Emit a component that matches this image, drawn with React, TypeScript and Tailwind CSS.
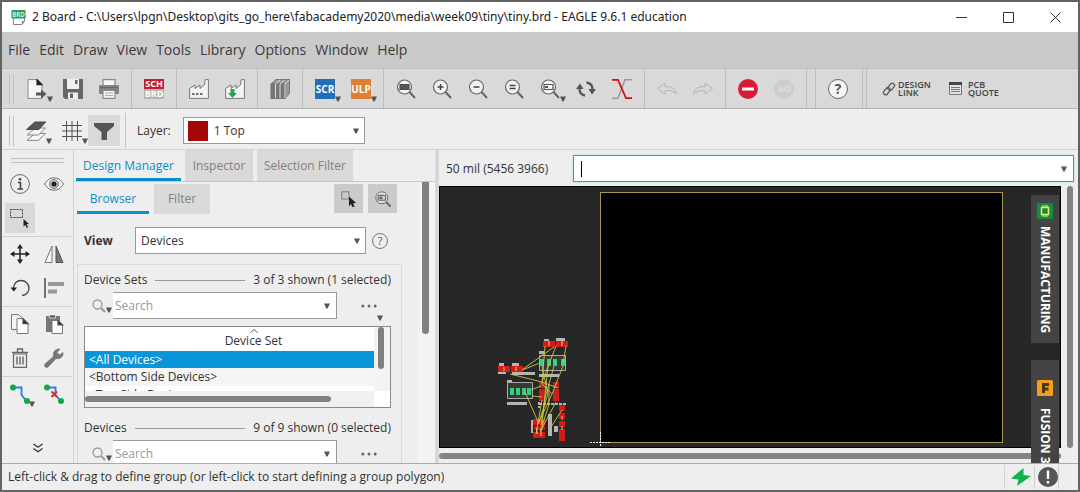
import type { ReactNode } from 'react';

interface ToolButtonProps {
  label: string;
  menu?: boolean;
  disabled?: boolean;
  children: ReactNode;
}

const Arrow = ({ className = '' }: { className?: string }) => (
  <svg viewBox="0 0 6 6" className={`pointer-events-none h-1.5 w-1.5 shrink-0 ${className}`} aria-hidden="true">
    <path d="M0 0.5h6L3.6 5.5H2.4z" fill="#555" />
  </svg>
);

const Icon = ({ size = 'md', children }: { size?: 'sm' | 'md'; children: ReactNode }) => (
  <svg
    viewBox="0 0 20 20"
    className={size === 'sm' ? 'h-4 w-4 shrink-0' : 'h-5 w-5 shrink-0'}
    fill="none"
    stroke="#4d4d4d"
    strokeWidth="1.2"
    aria-hidden="true"
  >
    {children}
  </svg>
);

const ToolButton = ({ label, menu = false, disabled = false, children }: ToolButtonProps) => (
  <button
    type="button"
    aria-label={label}
    disabled={disabled}
    className="relative flex h-[34px] w-9 shrink-0 items-center justify-center"
  >
    {children}
    {menu && <Arrow className="absolute right-0.5 bottom-1" />}
  </button>
);

const PaletteButton = ({ label, active = false, menu = false, children }: ToolButtonProps & { active?: boolean }) => (
  <button type="button" aria-label={label} className="relative flex h-[34px] w-[34px] items-center justify-center">
    <span className={`flex h-[30px] w-[30px] items-center justify-center ${active ? 'bg-[#d9d9d9]' : ''}`}>
      {children}
    </span>
    {menu && <Arrow className="absolute right-0.5 bottom-1" />}
  </button>
);

const Separator = () => <span className="mx-1 w-px shrink-0 self-stretch bg-[#bcbcbc]" />;

const Grip = () => <span className="h-[30px] w-[5px] shrink-0 border-x border-[#c0c0c0]" />;

const Lens = ({ children }: { children?: ReactNode }) => (
  <Icon>
    <circle cx="8.5" cy="8" r="7" fill="#f2f2f2" stroke="#666" />
    <path d="M13.5 13l5.5 6" stroke="#666" strokeWidth="2" />
    {children}
  </Icon>
);

const Factory = ({ children }: { children?: ReactNode }) => (
  <Icon>
    <path d="M.6 19.4V9.5L6 6v3.5L11 6v3.5L15.500 6l.7-5.400h3.200v18.800z" fill="#f3f3f3" stroke="#777" strokeWidth="1" />
    {children}
  </Icon>
);

const menus = ['File', 'Edit', 'Draw', 'View', 'Tools', 'Library', 'Options', 'Window', 'Help'];

const TitleBar = () => (
  <header className="flex h-[30px] items-center bg-white pr-[17px] pl-[9px]">
    <svg viewBox="0 0 16 17" className="h-4 w-4 shrink-0" aria-hidden="true">
      <path d="M2 6h12v7l-3 3.500H2z" fill="#fff" stroke="#777" />
      <path d="M14 13h-3v3.500z" fill="#777" />
      <rect x="0" y="1" width="15" height="9" rx="1" fill="#299b5b" />
      <text x="7.500" y="8" textAnchor="middle" fontSize="6.500" fontWeight="700" fill="#c9efd7">BRD</text>
    </svg>
    <h1 className="ml-[5px] truncate font-['Noto_Sans',sans-serif] text-xs text-[#222]">
      2 Board - C:\Users\lpgn\Desktop\gits_go_here\fabacademy2020\media\week09\tiny\tiny.brd - EAGLE 9.6.1 education
    </h1>
    <div className="ml-auto flex shrink-0 gap-9">
      <button type="button" aria-label="Minimize">
        <svg viewBox="0 0 11 11" className="h-[11px] w-[11px]"><path d="M0 5.500h11" stroke="#333" /></svg>
      </button>
      <button type="button" aria-label="Maximize">
        <svg viewBox="0 0 11 11" className="h-[11px] w-[11px]"><path d="M.5.5h10v10H.5z" fill="none" stroke="#333" /></svg>
      </button>
      <button type="button" aria-label="Close">
        <svg viewBox="0 0 11 11" className="h-[11px] w-[11px]"><path d="M.5.5l10 10M10.500.5l-10 10" stroke="#333" /></svg>
      </button>
    </div>
  </header>
);

const MenuBar = () => (
  <nav className="flex h-9 items-center gap-[9px] bg-[#cacaca] px-1.5 text-sm text-[#3a3a3a]">
    {menus.map((item) => (
      <button key={item} type="button">{item}</button>
    ))}
  </nav>
);

const MainToolbar = () => (
  <div className="flex h-[41px] items-center border-y border-t-[#bdbdbd] border-b-[#b5b5b5] bg-[#d9d9d9] pl-[7px]">
    <Grip />
    <span className="w-[5px] shrink-0" />
    <ToolButton label="Open" menu>
      <Icon>
        <path d="M1 .6h9.500l4.500 5v13.800H1z" fill="#f7f7f7" stroke="#888" strokeWidth="1" />
        <path d="M10 .6v5h5z" fill="#222" stroke="#222" />
        <path d="M9 13.500h5V10.500l5.500 4.500-5.500 4.500v-3H9z" fill="#555" stroke="none" />
      </Icon>
    </ToolButton>
    <ToolButton label="Save">
      <Icon>
        <path d="M0 0h20v20H2l-2-2z" fill="#666" stroke="none" />
        <path d="M4 0h12v10H4zM5 13.500h10V20H5z" fill="#f0f0f0" stroke="none" />
        <path d="M12 1h2.500v4H12zM7 14.500h3V19H7z" fill="#666" stroke="none" />
      </Icon>
    </ToolButton>
    <ToolButton label="Print">
      <Icon>
        <path d="M4 6V.6h12V6" fill="#f7f7f7" stroke="#888" />
        <rect x="0" y="6" width="20" height="9" rx="1" fill="#858585" stroke="none" />
        <path d="M1 8.500h18" stroke="#666" />
        <path d="M4 11.500h12v7.900H4z" fill="#f7f7f7" stroke="#888" />
        <path d="M6 14h8M6 16.500h8" stroke="#aaa" />
      </Icon>
    </ToolButton>
    <Separator />
    <ToolButton label="Switch to schematic">
      <span className="h-5 w-5 text-center text-[9px] leading-[10px] font-bold text-white">
        <span className="block bg-[#c4202c]">SCH</span>
        <span className="block bg-[#b5b5b5]">BRD</span>
      </span>
    </ToolButton>
    <Separator />
    <ToolButton label="CAM processor">
      <Factory><path d="M3 15h2.500M7 15h2.500M11 15h2.500" stroke="#444" strokeWidth="1.500" /></Factory>
    </ToolButton>
    <ToolButton label="Export manufacturing data">
      <Factory>
        <path d="M5.500 10h4v4H12l-4.500 5L3 14h2.500z" fill="#1fac46" stroke="none" />
      </Factory>
    </ToolButton>
    <Separator />
    <ToolButton label="Library manager">
      <Icon>
        <path d="M1 5L6 .5h13.500L15 5zM15 5l4.500-4.500v14L15 19.500z" fill="#999" stroke="#777" strokeWidth="1" />
        <path d="M1 5h14v14.500H1z" fill="#777" stroke="#777" />
        <path d="M5.500 19V5l4.500-4M10 19V5l4.500-4M15 19V5l4-4" stroke="#ddd" strokeWidth="1" />
      </Icon>
    </ToolButton>
    <Separator />
    <ToolButton label="Run script" menu>
      <span className="h-5 w-5 bg-[#226eba] text-center text-[10px] leading-5 font-bold text-white">SCR</span>
    </ToolButton>
    <ToolButton label="Run ULP" menu>
      <span className="h-5 w-5 bg-[#df7f37] text-center text-[10px] leading-5 font-bold text-white">ULP</span>
    </ToolButton>
    <Separator />
    <ToolButton label="Zoom to fit"><Lens><path d="M4 5.500h9v5H4z" fill="#555" /></Lens></ToolButton>
    <ToolButton label="Zoom in"><Lens><path d="M5.500 8h6M8.500 5v6" stroke="#444" strokeWidth="1.500" /></Lens></ToolButton>
    <ToolButton label="Zoom out"><Lens><path d="M5.500 8h6" stroke="#444" strokeWidth="1.500" /></Lens></ToolButton>
    <ToolButton label="Redraw"><Lens><path d="M5.500 6.500h6M5.500 9.500h6" stroke="#444" strokeWidth="1.300" /></Lens></ToolButton>
    <ToolButton label="Zoom select" menu>
      <Lens><path d="M4 5.500h9v5H4z" stroke="#555" /><path d="M5 7h3v2H5z" fill="#555" stroke="none" /></Lens>
    </ToolButton>
    <ToolButton label="Refresh">
      <Icon>
        <path d="M3.500 9.500c0 4 2.500 6.500 5.500 7M16.500 10.500c0-4-2.500-6.500-6-7" stroke="#555" strokeWidth="2.300" />
        <path d="M0 10l4-5.500L7.500 10zM12.500 10h7.500l-4 5.500z" fill="#555" stroke="none" />
      </Icon>
    </ToolButton>
    <ToolButton label="Ratsnest">
      <Icon>
        <path d="M0 19.200h6L13 .8h7" stroke="#999" strokeWidth="1.500" />
        <path d="M0 .8h6l8 18.400h6" stroke="#d80d0d" strokeWidth="1.700" />
      </Icon>
    </ToolButton>
    <Separator />
    <ToolButton label="Undo" disabled>
      <Icon><path d="M.5 9.500L8 4v3.500c6 0 11 1.500 11.500 7.500C17 12 13 11.500 8 11.500V15z" stroke="#b3b3b3" strokeWidth="1" /></Icon>
    </ToolButton>
    <ToolButton label="Redo" disabled>
      <Icon><path d="M19.500 9.500L12 4v3.500C6 7.500 1 9 .5 15 3 12 7 11.500 12 11.500V15z" stroke="#b3b3b3" strokeWidth="1" /></Icon>
    </ToolButton>
    <Separator />
    <ToolButton label="Stop">
      <Icon>
        <circle cx="10" cy="10" r="10" fill="#da1b36" stroke="none" />
        <path d="M4 10h12" stroke="#fff" strokeWidth="3" />
      </Icon>
    </ToolButton>
    <ToolButton label="Go" disabled>
      <span className="h-5 w-5 rounded-full bg-[#cdcdcd] text-center text-[9px] leading-5 font-bold text-[#dedede]">GO</span>
    </ToolButton>
    <Separator />
    <Separator />
    <ToolButton label="Help">
      <span className="h-5 w-5 rounded-full border border-[#666] bg-[#f5f5f5] text-center text-sm leading-[18px] font-bold text-[#555]">?</span>
    </ToolButton>
    <span className="mr-[15px] ml-1.5 w-[5px] shrink-0 self-stretch border-x border-[#bcbcbc]" />
    <button type="button" className="flex items-center gap-0.5 text-left text-[9px] leading-[8px] font-semibold text-[#444]">
      <svg viewBox="0 0 14 14" className="h-3.5 w-3.5" fill="none" stroke="#555" strokeWidth="1.200" aria-hidden="true">
        <rect x="-4" y="-2.200" width="8" height="4.400" rx="2.200" transform="translate(4.800 9.200) rotate(-50)" />
        <rect x="-4" y="-2.200" width="8" height="4.400" rx="2.200" transform="translate(9.200 4.800) rotate(-50)" />
      </svg>
      <span>DESIGN<br />LINK</span>
    </button>
    <button type="button" className="ml-[18px] flex items-center gap-1.5 text-left text-[9px] leading-[8px] font-semibold text-[#444]">
      <svg viewBox="0 0 13 13" className="h-[13px] w-[13px]" stroke="#777" aria-hidden="true">
        <path d="M.5.5h12v12H.5z" fill="#e4e4e4" />
        <path d="M0 1.500h13" stroke="#444" strokeWidth="3" />
        <path d="M2 5.500h9M2 7.500h9M2 9.500h9" />
      </svg>
      <span>PCB<br />QUOTE</span>
    </button>
  </div>
);

const LayerBar = () => (
  <div className="flex h-[41px] items-center border-b border-[#d2d2d2] pt-[3px] pl-[7px]">
    <Grip />
    <span className="w-1 shrink-0" />
    <ToolButton label="Layer settings" menu>
      <Icon>
        <path d="M1 19.400l8-7h10.500l-7 7z" fill="#f4f4f4" stroke="#888" strokeWidth="1" />
        <path d="M1 14l8-7h10.500l-7 7z" fill="#f4f4f4" stroke="#888" strokeWidth="1" />
        <path d="M1 8.500L9 1h10.500l-7 7.500z" fill="#555" />
      </Icon>
    </ToolButton>
    <ToolButton label="Grid" menu>
      <Icon><path d="M4.500 0v20M10 0v20M15.500 0v20M0 4.500h20M0 10h20M0 15.500h20" stroke="#555" strokeWidth="1" /></Icon>
    </ToolButton>
    <button type="button" aria-label="Selection filter" className="-ml-0.5 flex h-[31px] w-8 shrink-0 items-center justify-center bg-[#d9d9d9]">
      <Icon><path d="M0 2h20v3l-7 6v8H7.500v-8L0 5z" fill="#555" stroke="none" /></Icon>
    </button>
    <span className="mx-[5px] h-[35px] w-px shrink-0 bg-[#c4c4c4]" />
    <label htmlFor="layer" className="mr-3 ml-1.5 text-xs">Layer:</label>
    <div className="flex h-[27px] w-[182px] items-center border border-[#999] bg-white pr-[5px] pl-1">
      <span className="h-5 w-5 bg-[#a50707]" />
      <select id="layer" className="h-full flex-1 appearance-none pl-1.5 text-xs outline-none">
        <option>1 Top</option>
      </select>
      <Arrow />
    </div>
  </div>
);

const Palette = () => (
  <aside className="flex w-[72px] shrink-0 flex-col border-r border-[#d2d2d2]">
    <span className="mx-[9px] mt-2 mb-1 h-[5px] shrink-0 border-y border-[#c0c0c0]" />
    <div className="flex w-[70px] flex-wrap border-b border-[#d2d2d2] pb-px pl-px">
      <PaletteButton label="Info">
        <Icon>
          <circle cx="10" cy="10" r="9.400" stroke="#666" strokeWidth="1" />
          <path d="M8 8.500h2.500V15M7.500 15h5.500" stroke="#444" strokeWidth="1.600" />
          <circle cx="10" cy="5.300" r="1.300" fill="#444" stroke="none" />
        </Icon>
      </PaletteButton>
      <PaletteButton label="Show">
        <Icon>
          <path d="M.6 10C3 6 6 3.800 10 3.800S17 6 19.400 10C17 14 14 16.200 10 16.200S3 14 .6 10z" fill="#f5f5f5" stroke="#666" strokeWidth="1" />
          <circle cx="10" cy="10" r="4.500" fill="#ccc" stroke="#777" strokeWidth="1" />
          <circle cx="10" cy="10" r="2.600" fill="#222" stroke="none" />
        </Icon>
      </PaletteButton>
      <PaletteButton label="Group" active>
        <Icon>
          <path d="M.5 1.500h12v8H.5z" stroke="#444" strokeWidth="1" strokeDasharray="2 1" />
          <path d="M13.500 11l5.500 5-2.400.3 1.400 3-1.300.6-1.400-3-1.800 1.700z" fill="#222" stroke="none" />
        </Icon>
      </PaletteButton>
    </div>
    <div className="flex w-[70px] flex-wrap border-b border-[#d2d2d2] pb-px pl-px">
      <PaletteButton label="Move">
        <Icon>
          <path d="M10 2v16M2 10h16" stroke="#222" strokeWidth="1.500" />
          <path d="M10 0l3 4.500H7zM10 20l3-4.500H7zM0 10l4.500-3v6zM20 10l-4.500-3v6z" fill="#222" stroke="none" />
        </Icon>
      </PaletteButton>
      <PaletteButton label="Mirror">
        <Icon>
          <path d="M8 2v16.500H1z" fill="#f7f7f7" stroke="#777" strokeWidth="1" />
          <path d="M12 2v16.500h7z" fill="#777" stroke="#555" strokeWidth="1" />
        </Icon>
      </PaletteButton>
      <PaletteButton label="Rotate">
        <Icon>
          <path d="M3.500 11C3.500 5 7 2.500 11 2.500c4.500 0 8 3.500 8 7.500s-3 7.500-7 7.500" stroke="#444" strokeWidth="1.300" />
          <path d="M.5 9.500h6.500L3.800 13.500z" fill="#222" stroke="none" />
        </Icon>
      </PaletteButton>
      <PaletteButton label="Align">
        <Icon>
          <path d="M1 0v20" stroke="#222" />
          <path d="M4 6h16M4 13.500h9" stroke="#999" strokeWidth="4" />
        </Icon>
      </PaletteButton>
    </div>
    <div className="flex w-[70px] flex-wrap border-b border-[#d2d2d2] pb-px pl-px">
      <PaletteButton label="Copy">
        <Icon>
          <path d="M1.500.6h7l4 4v11h-11z" fill="#f7f7f7" stroke="#777" strokeWidth="1" />
          <path d="M7 4.600h6l5 5v9.900H7z" fill="#fff" stroke="#777" strokeWidth="1" />
          <path d="M13 4.600v5h5z" fill="#333" />
        </Icon>
      </PaletteButton>
      <PaletteButton label="Paste">
        <Icon>
          <path d="M2 2h14v16H2z" fill="#777" stroke="none" />
          <path d="M5.500 1h6v3h-6z" fill="#555" stroke="#eee" strokeWidth=".8" />
          <path d="M8 6.500h6l4.500 4.500v8.500H8z" fill="#fff" stroke="#777" strokeWidth="1" />
          <path d="M14 6.500V11h4.500z" fill="#333" />
        </Icon>
      </PaletteButton>
      <PaletteButton label="Delete">
        <Icon>
          <path d="M3.500 6h13v13.400h-13z" fill="#eee" stroke="#666" />
          <path d="M2 4.500h16M7.500 4V1h5v3M7 8.500v8M10 8.500v8M13 8.500v8" stroke="#666" strokeWidth="1.400" />
        </Icon>
      </PaletteButton>
      <PaletteButton label="Properties">
        <Icon>
          <path d="M1 16l8.500-7.500C8.500 4 11.500.5 16 1l-3 3.500 2.500 2.500L19 4.500c.5 4-2.500 7-7 6L4 19c-2 1.500-4.500-1-3-3z" fill="#777" stroke="#666" strokeWidth=".6" />
        </Icon>
      </PaletteButton>
    </div>
    <div className="flex w-[70px] flex-wrap pl-px">
      <PaletteButton label="Route" menu>
        <Icon>
          <path d="M3 3.500h8.500V11l5 6" stroke="#1b86d8" strokeWidth="1.800" />
          <circle cx="3" cy="3.500" r="3" fill="#13a547" stroke="none" />
          <circle cx="17" cy="17" r="3" fill="#13a547" stroke="none" />
        </Icon>
      </PaletteButton>
      <PaletteButton label="Ripup">
        <Icon>
          <path d="M3 3.500h8.500V11l5 6" stroke="#1b86d8" strokeWidth="1.800" />
          <circle cx="3" cy="3.500" r="3" fill="#13a547" stroke="none" />
          <circle cx="17" cy="17" r="3" fill="#13a547" stroke="none" />
          <path d="M7.500 7.500l5.500 5.500M13 7.500L7.500 13" stroke="#e3252c" strokeWidth="2" />
        </Icon>
      </PaletteButton>
    </div>
    <button type="button" aria-label="More tools" className="mt-auto mb-2.5 self-center">
      <svg viewBox="0 0 10 10" className="h-2.5 w-2.5" fill="none" stroke="#333" strokeWidth="1.300">
        <path d="M.5 1L5 4.300 9.500 1M.5 5.500L5 8.800l4.500-3.300" />
      </svg>
    </button>
  </aside>
);

interface SetHeadingProps {
  title: string;
  summary: string;
}

const SetHeading = ({ title, summary }: SetHeadingProps) => (
  <div className="flex h-6 items-center gap-2 pr-2.5">
    <h2>{title}</h2>
    <span className="h-px flex-1 bg-[#999]" />
    <span>{summary}</span>
  </div>
);

const SearchRow = ({ id }: { id: string }) => (
  <div className="flex h-[27px] items-center pr-[18px] pl-2">
    <label htmlFor={id} aria-label="Search" className="flex w-[21px] shrink-0 items-end">
      <svg viewBox="0 0 14 14" className="h-3.5 w-3.5" fill="none" stroke="#999" strokeWidth="1.300">
        <circle cx="5.500" cy="5.500" r="4.500" />
        <path d="M9 9l4 4" strokeWidth="2" />
      </svg>
      <Arrow />
    </label>
    <div className="flex h-full min-w-0 flex-1 items-center border border-l-0 border-[#999] bg-white pr-1.5">
      <input id={id} placeholder="Search" className="min-w-0 flex-1 px-0.5 outline-none placeholder:text-[#999]" />
      <Arrow />
    </div>
    <button type="button" aria-label="More options" className="relative ml-6 flex h-[27px] w-[22px] items-center">
      <svg viewBox="0 0 16 4" className="h-1 w-4" fill="#666">
        <circle cx="1.800" cy="2" r="1.500" />
        <circle cx="8" cy="2" r="1.500" />
        <circle cx="14.200" cy="2" r="1.500" />
      </svg>
      <Arrow className="absolute right-0 -bottom-0.5" />
    </button>
  </div>
);

const DeviceSetTable = () => (
  <div className="mr-2.5 border border-[#888] bg-white">
    <div className="flex h-16">
      <div className="min-w-0 flex-1 overflow-hidden">
        <table className="w-full border-collapse">
          <thead>
            <tr>
              <th scope="col" className="h-6 p-0 pl-12 font-normal">
                <span className="flex flex-col items-center">
                  <svg viewBox="0 0 8 4" className="h-1 w-2" fill="none" stroke="#555"><path d="M.5 3.500L4 .5l3.500 3" /></svg>
                  <span className="leading-4">Device Set</span>
                </span>
              </th>
            </tr>
          </thead>
          <tbody>
            <tr className="bg-[#0895d9] text-white"><td className="h-[17px] p-0 pl-1 leading-[17px]">&lt;All Devices&gt;</td></tr>
            <tr className="bg-[#f5f5f5]"><td className="h-[18px] p-0 pl-1 leading-[18px]">&lt;Bottom Side Devices&gt;</td></tr>
            <tr><td className="p-0 pl-1 leading-[18px]">&lt;Top Side Devices&gt;</td></tr>
          </tbody>
        </table>
      </div>
      <div className="w-4 shrink-0 bg-[#f3f3f3] pl-1">
        <span className="block h-[42px] w-1.5 rounded-full bg-[#808080]" />
      </div>
    </div>
    <div className="mr-4 flex h-4 items-center bg-[#f0f0f0]">
      <span className="h-1.5 w-[246px] rounded-full bg-[#808080]" />
    </div>
  </div>
);

const DesignManager = () => (
  <section className="flex w-[361px] shrink-0 flex-col text-xs">
    <div role="tablist" className="flex h-8 shrink-0 gap-1 border-b border-[#c8c8c8] pl-0.5">
      <button role="tab" aria-selected="true" className="w-[105px] border-b-[3px] border-[#0a8fc9] pt-[3px] text-[#0a8fc9]">Design Manager</button>
      <button role="tab" aria-selected="false" className="w-[68px] bg-[#d9d9d9] text-[#808080]">Inspector</button>
      <button role="tab" aria-selected="false" className="w-24 bg-[#d9d9d9] text-[#808080]">Selection Filter</button>
    </div>
    <div className="flex min-h-0 flex-1">
      <div className="min-w-0 flex-1 px-[3px]">
        <div className="mt-0.5 flex h-[30px] gap-[5px] pr-[18px]">
          <button role="tab" aria-selected="true" className="w-[72px] border-b-[3px] border-[#0a8fc9] pt-0.5 text-[#0a8fc9]">Browser</button>
          <button role="tab" aria-selected="false" className="w-14 bg-[#d9d9d9] text-[#808080]">Filter</button>
          <button type="button" aria-label="Pick object" className="ml-auto flex h-[29px] w-[29px] items-center justify-center bg-[#cbcbcb]">
            <Icon size="sm">
              <path d="M1 1h9v9H1z" stroke="#777" />
              <path d="M10 7l9 8-4 .4 2 4-2.500 1-2-4-2.500 2.600z" fill="#222" stroke="none" />
            </Icon>
          </button>
          <button type="button" aria-label="Zoom to object" className="flex h-[29px] w-[29px] items-center justify-center bg-[#cbcbcb]">
            <Icon size="sm">
              <circle cx="8.500" cy="8.500" r="7.500" fill="#ddd" stroke="#666" />
              <path d="M14 14l5.500 5.500" stroke="#666" strokeWidth="2.500" />
              <path d="M4 5.500h9v6H4zM6 7.500h3v2H6z" stroke="#555" />
            </Icon>
          </button>
        </div>
        <div className="mt-[13px] flex items-center pl-[7px]">
          <label htmlFor="view" className="w-[51px] font-bold">View</label>
          <div className="flex h-[27px] w-[231px] items-center border border-[#999] bg-white pr-[5px]">
            <select id="view" className="h-full flex-1 appearance-none pl-[5px] outline-none">
              <option>Devices</option>
            </select>
            <Arrow />
          </div>
          <button type="button" aria-label="View help" className="ml-1.5 h-4 w-4 rounded-full border border-[#777] text-[11px] leading-[14px] text-[#555]">?</button>
        </div>
        <div className="mt-2.5 mr-[13px] border border-b-0 border-[#dadada] pt-[3px] pl-1.5">
          <SetHeading title="Device Sets" summary="3 of 3 shown (1 selected)" />
          <SearchRow id="search-sets" />
          <div className="h-[7px]" />
          <DeviceSetTable />
          <div className="h-2" />
          <SetHeading title="Devices" summary="9 of 9 shown (0 selected)" />
          <SearchRow id="search-devices" />
        </div>
      </div>
      <div className="w-[17px] shrink-0 bg-[#f3f3f3] pl-1">
        <span className="block h-[152px] w-[7px] rounded-b bg-[#808080]" />
      </div>
    </div>
  </section>
);

const greenPads = [[46, 25], [53, 25], [59, 25], [67, 25], [16, 54], [22, 54], [28, 54], [33, 54]];

const redPads = [
  [49, 7], [55, 7], [62, 7], [68, 7],
  [4, 32], [10, 32], [17, 32], [23, 32],
  [45, 48], [45, 55], [45, 61], [59, 48], [59, 55], [59, 61],
  [39, 85], [45, 85], [39, 98], [45, 98],
  [65, 71], [65, 79], [65, 87], [65, 95], [65, 101]
];

const BoardDrawing = () => (
  <svg viewBox="0 0 120 113" className="absolute bottom-0 left-[54px] h-[113px] w-[120px]" aria-label="Unplaced components">
    <path
      d="M50 5h5v2h-5zM62 4h9v3h-9zM5 29h5v3H5zM18 29h7v3h-7zM4 37h8v3H4zM18 38h23v3H18zM13 46h5v2h-5zM13 68h20v3H13zM45 17h5v3h-5zM45 40h20v3H45zM37 86h2v13h-2zM54 80h4v22h-4zM60 92h4v6h-4z"
      fill="#b5b5b5"
    />
    <path d="M45 70h27M45 68v6" stroke="#b5b5b5" strokeWidth="2" strokeDasharray="3 1" />
    <path d="M45.500 21.500h26v15h-26zM13.500 48.500h25v16h-25z" fill="#383838" stroke="#aaa" />
    {greenPads.map(([x, y]) => <rect key={`${x}-${y}`} x={x} y={y} width="4" height="7" fill="#32d17c" />)}
    <path d="M40 92h11v4H40z" fill="#c91b1b" />
    {redPads.map(([x, y]) => <rect key={`${x}-${y}`} x={x} y={y} width="6" height="6" fill="#d01c1c" />)}
    <path
      d="M51 12L48 50M60 13L29 35M62 12L48 48M72 12L69 30M28 36l18-7M16 40l32 8 16 6M48 32l6 28-9 28M54 32l-6 58M60 32l-9 32-4 28M69 32L58 60 44 90M31 58l14 32M37 56l10-4M38 62l10 1M48 66l-6 34M55 50v20l-8 26M68 76L55 96M48 50l10 10M62 68L46 98"
      fill="none"
      stroke="#c6c944"
      strokeWidth=".9"
    />
    <path d="M55 7v5M68 7v5M10 33v4M22 33v4M43 94v6M47 94v8M68 82v4M68 92v4" stroke="#e8d84a" />
    <path d="M96 108.500h21M106.500 98v15" stroke="#eee" strokeDasharray="2 1" />
  </svg>
);

const Workspace = () => (
  <section className="relative flex min-w-0 flex-1 flex-col overflow-hidden">
    <div className="flex h-8 items-center pt-[5px] pr-1 pl-[7px]">
      <label htmlFor="command" className="w-[127px] shrink-0 text-xs">50 mil (5456 3966)</label>
      <div className="flex h-[27px] min-w-0 flex-1 items-center border border-[#3f9abc] bg-white pr-1.5 pl-[7px] shadow-[0_0_2px_#8fe0f5]">
        <span className="h-4 w-px bg-black" />
        <input id="command" className="h-full min-w-0 flex-1 pl-1 text-xs outline-none" />
        <Arrow />
      </div>
    </div>
    <div className="mt-1 flex min-h-0 flex-1">
      <div className="relative min-w-0 flex-1 border border-black bg-[#272727]">
        <div className="absolute top-[5px] right-[57px] bottom-1 left-40 border border-[#ac9551] bg-black" />
        <BoardDrawing />
      </div>
      <div className="w-[17px] shrink-0 pl-1.5">
        <span className="block h-full w-1.5 rounded-full bg-[#848484]" />
      </div>
    </div>
    <div className="flex h-[15px] items-center pr-[17px]">
      <span className="h-1.5 w-full rounded-full bg-[#848484]" />
    </div>
    <div className="absolute top-[45px] right-[19px] flex w-7 flex-col gap-[17px] text-xs font-bold text-white">
      <button type="button" className="flex h-[148px] flex-col items-center gap-[7px] bg-[#444] pt-2">
        <svg viewBox="0 0 16 16" className="h-4 w-4" aria-hidden="true">
          <rect width="16" height="16" rx="1.500" fill="#168b42" />
          <path d="M4.500 4.500h7v7h-7z" fill="#168b42" stroke="#ecec6a" strokeWidth="1.500" />
          <path d="M6 2v2M8 2v2M10 2v2M6 12v2M8 12v2M10 12v2" stroke="#ecec6a" />
        </svg>
        <span className="[writing-mode:vertical-rl]">MANUFACTURING</span>
      </button>
      <button type="button" className="flex h-[148px] flex-col items-center gap-3 bg-[#444] pt-5">
        <svg viewBox="0 0 16 16" className="h-4 w-4" aria-hidden="true">
          <rect width="16" height="16" rx="1.500" fill="#f59e1b" />
          <path d="M5 3h7v3H8v1.500h3.500v3H8V13H5z" fill="#4b3515" />
        </svg>
        <span className="[writing-mode:vertical-rl]">FUSION 360</span>
      </button>
    </div>
  </section>
);

const StatusBar = () => (
  <footer className="flex h-[27px] items-center border-t border-[#aaa] bg-[#eee] pr-[19px] pl-1.5 text-xs">
    <p className="truncate">Left-click &amp; drag to define group (or left-click to start defining a group polygon)</p>
    <div className="ml-auto flex h-6 shrink-0 items-center gap-[3px] border-x border-[#d2d2d2] pl-1.5">
      <svg viewBox="0 0 20 20" className="h-5 w-5" aria-label="Linked">
        <path d="M12.500 1L0 11.500l7.500 1L6 19 20 9l-7.500-1z" fill="#12b24b" />
      </svg>
      <span className="h-6 w-px bg-[#d2d2d2]" />
      <svg viewBox="0 0 20 20" className="h-5 w-5" aria-label="Alerts">
        <circle cx="10" cy="10" r="10" fill="#555" />
        <path d="M10 3.500v8.500M10 14v2.500" stroke="#fff" strokeWidth="2.400" />
      </svg>
    </div>
  </footer>
);

export default function App() {
  return (
    <div className="flex h-screen flex-col border-2 border-[#636363] bg-[#eee] font-['Open_Sans','Noto_Sans',sans-serif] text-[#333]">
      <TitleBar />
      <MenuBar />
      <MainToolbar />
      <LayerBar />
      <main className="flex min-h-0 flex-1 overflow-hidden">
        <Palette />
        <DesignManager />
        <span className="w-1 shrink-0 border-x border-[#dcdcdc] bg-[#d5d5d5]" />
        <Workspace />
      </main>
      <StatusBar />
    </div>
  );
}
